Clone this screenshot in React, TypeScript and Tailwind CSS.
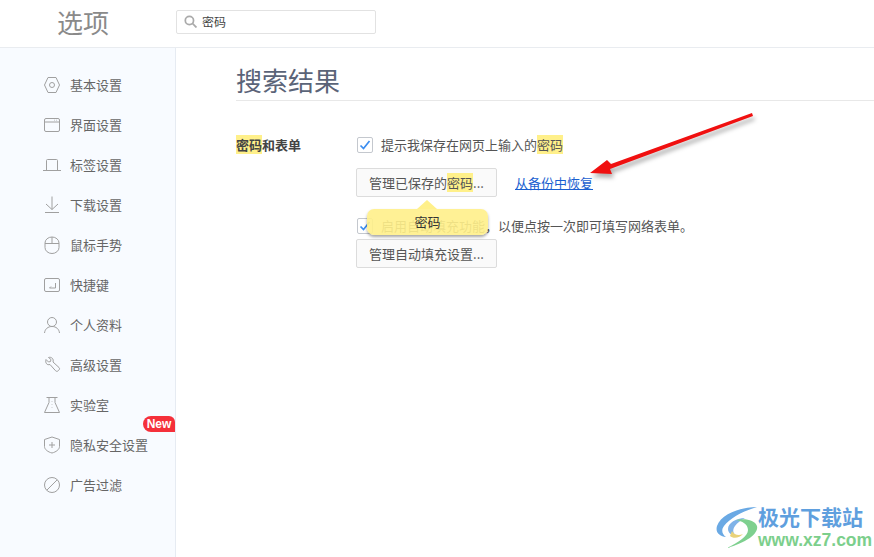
import React from "react"

const cjk = { fontFamily: '"Noto Sans CJK SC", "Liberation Sans", sans-serif' }

const icons: Record<string, React.ReactNode> = {
  basic: (
    <>
      <path d="M5 1.500h8L16.500 9 13 16.500H5L1.500 9z" />
      <circle cx="9" cy="9" r="2.500" />
    </>
  ),
  ui: (
    <>
      <rect x="1.500" y="2.500" width="15" height="13" rx="1.500" />
      <path d="M1.500 6h15M11 4.200h.6M13 4.200h.6" />
    </>
  ),
  tab: <path d="M3.500 14V4.500a1 1 0 0 1 1-1h9a1 1 0 0 1 1 1V14M0 14.500h18" />,
  download: <path d="M9 .5v13M3 8l6 5.500L15 8M2 16.500h14" />,
  mouse: (
    <>
      <path d="M2 7a7 6 0 0 1 14 0v4.500a7 6 0 0 1-14 0z" />
      <path d="M2 7.500h14M9 1v6.500" />
    </>
  ),
  keys: (
    <>
      <rect x="1.500" y="2.500" width="15" height="13" rx="1.500" />
      <path d="M12.500 7v5H6.500M8 10.500 6.500 12" />
    </>
  ),
  user: (
    <>
      <circle cx="9" cy="6" r="4.500" />
      <path d="M1.500 17c.5-4 3.300-6.500 7.500-6.500s7 2.500 7.500 6.500" />
    </>
  ),
  wrench: <path d="M3 3.500 5.500 6l2-.5.500-2L5.500 1.500c3-1 5.500 1.500 4.500 4.500l6 5.500c1 1 .5 2-.5 3s-2 1.200-3 .2L7 8.500C4 9.500 2 7 3 3.500z" />,
  lab: (
    <>
      <path d="M3.500 1.500h11M6 1.500v5L1.500 16.500h15L12 6.500v-5" />
      <path d="M9 5v.5M9 8v.5M9 11v.5" />
    </>
  ),
  shield: (
    <>
      <path d="M9 1 16.500 3.500v7c0 3-3.500 5.500-7.500 6.500-4-1-7.500-3.500-7.500-6.500v-7z" />
      <path d="M9 6v6M6 9h6" />
    </>
  ),
  block: (
    <>
      <circle cx="9" cy="9" r="7.500" />
      <path d="M3.800 14.200 14.200 3.800" />
    </>
  ),
}

const navItems = [
  { key: "basic", label: "基本设置" },
  { key: "ui", label: "界面设置" },
  { key: "tab", label: "标签设置" },
  { key: "download", label: "下载设置" },
  { key: "mouse", label: "鼠标手势" },
  { key: "keys", label: "快捷键" },
  { key: "user", label: "个人资料" },
  { key: "wrench", label: "高级设置" },
  { key: "lab", label: "实验室" },
  { key: "shield", label: "隐私安全设置", isNew: true },
  { key: "block", label: "广告过滤" },
]

function Mark({ children }: { children: React.ReactNode }) {
  return <span className="bg-[#fff08a]">{children}</span>
}

function Check() {
  return (
    <span className="w-[16px] h-[16px] shrink-0 rounded-[2px] border border-[#c4c8ce] bg-white flex items-center justify-center">
      <svg width="12" height="12" viewBox="0 0 12 12" fill="none" stroke="#3b8df0" strokeWidth="1.700">
        <path d="M1.500 6.500 4.500 9.500 10.500 2" />
      </svg>
    </span>
  )
}

function Btn({ children }: { children: React.ReactNode }) {
  return (
    <button className="w-[141px] h-[29px] rounded-[2px] border border-[#dcdcdc] bg-[#fafafa] text-[13px] text-[#555] flex items-center justify-center">
      {children}
    </button>
  )
}

export default function App() {
  return (
    <div className="relative w-[874px] h-[557px] overflow-hidden bg-white flex flex-col" style={cjk}>
      <header className="h-[48px] shrink-0 border-b border-[#e9ecf0] flex items-center">
        <div className="w-[176px] pl-[57px] pb-[4px] text-[26px] leading-none text-[#8a8a8a]">选项</div>
        <div className="w-[200px] h-[24px] mb-[4px] rounded-[2px] border border-[#e2e2e2] flex items-center pl-[7px] gap-[5px] text-[12px] text-[#444]">
          <svg width="13" height="13" viewBox="0 0 12 12" fill="none" stroke="#aaa" strokeWidth="1.600">
            <circle cx="5" cy="5" r="3.800" />
            <path d="M8 8l3.500 3.500" />
          </svg>
          密码
        </div>
      </header>

      <div className="flex-1 flex min-h-0">
        <aside className="w-[176px] shrink-0 bg-[#f8fbff] border-r border-[#e6ebf2] pt-[17px]">
          {navItems.map((item) => (
            <div key={item.key} className="relative h-[40px] flex items-center pl-[43px] gap-[9px] text-[13px] text-[#666]">
              <svg width="18" height="18" viewBox="0 0 18 18" fill="none" stroke="#a0a0a0" strokeWidth="1" className="shrink-0">
                {icons[item.key]}
              </svg>
              <span className="mb-[1px]">{item.label}</span>
              {item.isNew && (
                <span className="absolute right-[0px] top-[-9px] w-[32px] h-[16px] bg-[#f5303a] rounded-l-[8px] rounded-tr-[6px] text-white text-[12px] font-bold leading-[16px] text-center [font-family:'Liberation_Sans',sans-serif]">
                  New
                </span>
              )}
            </div>
          ))}
        </aside>

        <main className="flex-1 pl-[60px]">
          <h1 className="h-[53px] border-b border-[#e8e8e8] pt-[14px] text-[26px] leading-[36px] text-[#5b6478] font-normal">搜索结果</h1>
          <div className="flex pt-[35px] text-[13px] text-[#555]">
            <div className="w-[120px] -mt-[1px] font-bold text-[#444] leading-[19px]"><Mark>密码</Mark>和表单</div>
            <div className="flex flex-col">
              <div className="flex items-center gap-[8px] pl-[1px] h-[18px]">
                <Check />
                <span><span>提示我保存在网页上输入的</span><Mark>密码</Mark></span>
              </div>
              <div className="flex items-center gap-[18px] mt-[14px]">
                <Btn>
                  管理已保存的<Mark>密码</Mark>...
                </Btn>
                <a className="text-[#1a5fd0] underline">从备份中恢复</a>
              </div>
              <div className="flex items-center gap-[8px] pl-[1px] h-[18px] mt-[20px]">
                <Check />
                <span>启用自动填充功能，以便点按一次即可填写网络表单。</span>
              </div>
              <div className="mt-[4px]">
                <Btn>管理自动填充设置...</Btn>
              </div>
            </div>
          </div>
        </main>
      </div>

      {/* search hit bubble */}
      <div className="absolute left-[367px] top-[209px] w-[121px] h-[26px] rounded-[7px] bg-[#fff08a]/90 shadow-[0_2px_3px_rgba(0,0,0,0.35)] flex items-center justify-center text-[13px] text-[#333]">
        密码
        <span className="absolute left-[50px] top-[-9px] w-0 h-0 border-x-[10px] border-x-transparent border-b-[9px] border-b-[#fff08a]" />
      </div>

      {/* red annotation arrow */}
      <svg className="absolute left-[580px] top-[105px] drop-shadow-[2px_4px_2px_rgba(0,0,0,0.3)]" width="185" height="80" viewBox="0 0 185 80" fill="none">
        <path d="M172 8 31 59l-4-4-17 13 22 1-2-5L173 11z" fill="#f01010" />
      </svg>

      {/* watermark */}
      <div className="absolute left-[716px] top-[504px] w-[156px] h-[46px]">
        <svg className="absolute left-0 top-0" width="44" height="46" viewBox="0 0 44 46" fill="none">
          <path d="M41 3C25 3 5 10 1 22c-2 7 3 10 9 11-4-3-5-7-2-11C14 14 27 7 41 3z" fill="#6aa9e4" />
          <path d="M29 14c-9 0-17 5-17 11 0 4 4 7 9 7-4-2-5-6-2-10 2-3 6-6 10-8z" fill="#7fb3e8" />
          <path d="M20 16c9-2 19 0 21 6 2 8-12 17-30 22 12-6 21-12 21-18 0-6-6-9-12-10z" fill="#7ed08f" />
          <path d="M16 27c2 4 7 5 11 3-3 4-10 5-13 2z" fill="#e9d27a" />
        </svg>
        <div className="absolute left-[42px] top-[-2px] text-[21px] leading-[28px] font-bold text-[#5f9fde] whitespace-nowrap">极光下载站</div>
        <div className="absolute left-[42px] top-[27px] text-[17.500px] leading-[19px] font-bold text-[#7ccf8c] whitespace-nowrap [font-family:'Liberation_Sans',sans-serif]">www.xz7.com</div>
      </div>
    </div>
  )
}
